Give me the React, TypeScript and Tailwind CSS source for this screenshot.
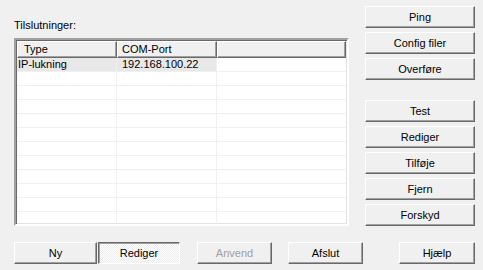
import React from 'react';

const font = "font-['Liberation_Sans',Arial,sans-serif]";

interface BtnProps {
  label: string;
  className?: string;
  disabled?: boolean;
  pressed?: boolean;
}

const Btn: React.FC<BtnProps> = ({ label, className = '', disabled = false, pressed = false }) => {
  const look = pressed
    ? 'border-t-[#696969] border-l-[#696969] border-r-white border-b-white shadow-[inset_1px_1px_0_#a0a0a0] bg-[image:repeating-conic-gradient(#ffffff_0%_25%,#ececec_0%_50%)] bg-[length:2px_2px]'
    : 'border-t-white border-l-white border-r-[#696969] border-b-[#696969] shadow-[inset_-1px_-1px_0_#a0a0a0] bg-[#f0f0f0]';
  return (
    <div
      className={`flex h-[22px] items-center justify-center border text-[11px] leading-none ${look} ${
        disabled ? 'text-[#a0a0a0]' : 'text-black'
      } ${className}`}
    >
      {label}
    </div>
  );
};

const rows: string[][] = [['IP-lukning', '192.168.100.22']];
for (let i = 0; i < 11; i++) rows.push(['', '']);

export default function App() {
  return (
    <div className={`flex h-[270px] w-[483px] flex-col overflow-hidden bg-[#f0f0f0] ${font}`}>
      <div className="flex">
        {/* Connections list */}
        <div className="flex flex-col pl-[14px] pt-[19px]">
          <div className="h-[13px] text-[11px] leading-[13px] text-black">Tilslutninger:</div>
          <div className="mt-[6px] flex h-[188px] w-[335px] flex-col overflow-hidden border-2 border-t-[#a0a0a0] border-l-[#a0a0a0] border-r-white border-b-white bg-white shadow-[inset_1px_1px_0_#696969,inset_-1px_-1px_0_#e3e3e3] p-[1px] pl-[1px]">
            <div className="flex h-[17px] shrink-0 text-[11px] leading-none text-black">
              <div className="flex w-[100px] items-center border border-t-white border-l-white border-r-[#696969] border-b-[#696969] bg-[#f0f0f0] pl-[6px] shadow-[inset_-1px_-1px_0_#a0a0a0]">
                Type
              </div>
              <div className="flex w-[100px] items-center border border-t-white border-l-white border-r-[#696969] border-b-[#696969] bg-[#f0f0f0] pl-[4px] shadow-[inset_-1px_-1px_0_#a0a0a0]">
                COM-Port
              </div>
              <div className="flex flex-1 items-center border border-t-white border-l-white border-r-[#696969] border-b-[#696969] bg-[#f0f0f0] shadow-[inset_-1px_-1px_0_#a0a0a0]" />
            </div>
            {rows.map((r, i) => (
              <div key={i} className="flex h-[14px] shrink-0 border-b border-[#f0f0f0] text-[11px] leading-[13px] text-black">
                <div className={`w-[100px] border-r border-[#f0f0f0] pl-[1px] ${i === 0 ? 'bg-[#e8e8e8]' : ''}`}>{r[0]}</div>
                <div className={`w-[100px] border-r border-[#f0f0f0] pl-[5px] ${i === 0 ? 'bg-[#e8e8e8]' : ''}`}>{r[1]}</div>
                <div className="flex-1" />
              </div>
            ))}
          </div>
        </div>

        {/* Right side buttons */}
        <div className="ml-[16px] flex w-[110px] flex-col gap-[4px] pt-[6px]">
          <Btn label="Ping" />
          <Btn label="Config filer" />
          <Btn label="Overføre" />
          <Btn label="Test" className="mt-[16px]" />
          <Btn label="Rediger" />
          <Btn label="Tilføje" />
          <Btn label="Fjern" />
          <Btn label="Forskyd" />
        </div>
      </div>

      {/* Bottom buttons */}
      <div className="mt-[16px] flex pl-[14px]">
        <Btn label="Ny" className="w-[83px]" />
        <Btn label="Rediger" pressed className="ml-[1px] w-[82px]" />
        <Btn label="Anvend" disabled className="ml-[17px] w-[75px]" />
        <Btn label="Afslut" className="ml-[16px] w-[75px]" />
        <Btn label="Hjælp" className="ml-[36px] w-[76px]" />
      </div>
    </div>
  );
}
